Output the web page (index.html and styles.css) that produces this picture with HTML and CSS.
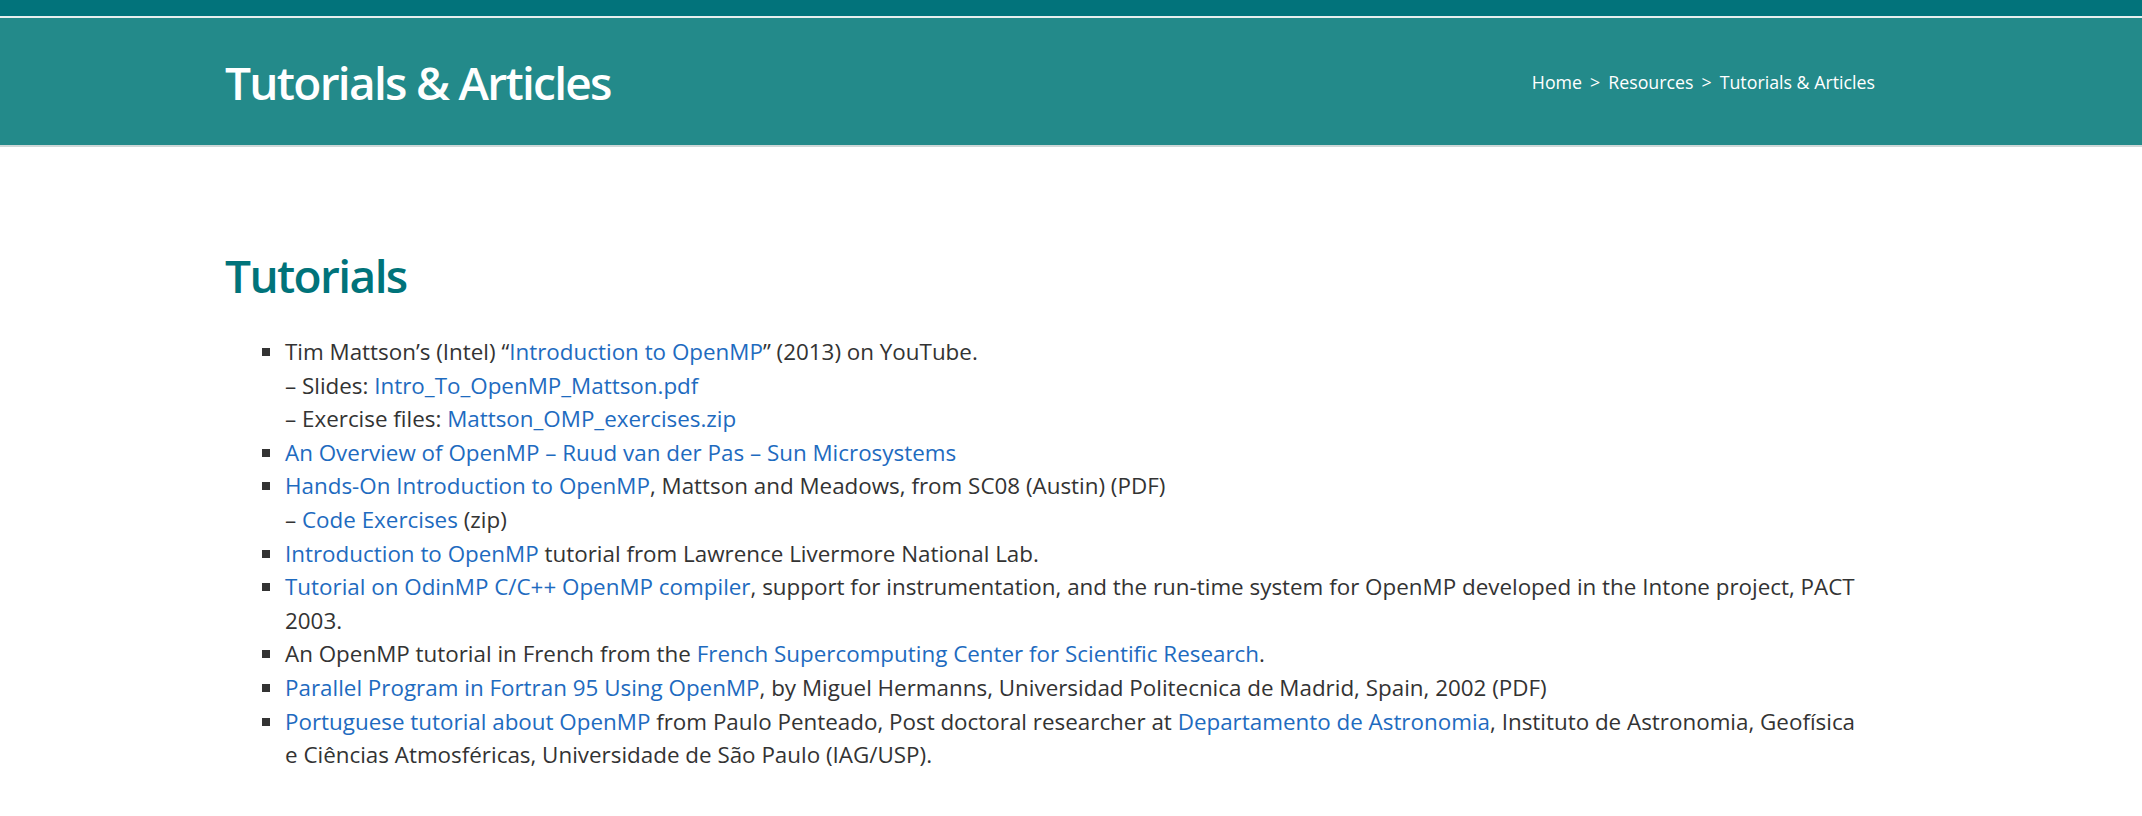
FILE: index.html
```html
<!DOCTYPE html>
<html>
<head>
<meta charset="utf-8">
<link rel="stylesheet" href="styles.css">
</head>
<body>
<div class="topbar"></div>
<header class="page-header">
  <div class="container header-inner">
    <h1 class="page-title">Tutorials &amp; Articles</h1>
    <nav class="breadcrumb"><a href="#">Home</a><span class="sep">&gt;</span><a href="#">Resources</a><span class="sep">&gt;</span><span>Tutorials &amp; Articles</span></nav>
  </div>
</header>
<main class="container content">
  <h2 class="section-title">Tutorials</h2>
  <ul class="list">
    <li>Tim Mattson’s (Intel) “<a href="#">Introduction to OpenMP</a>” (2013) on YouTube.<br>– Slides: <a href="#">Intro_To_OpenMP_Mattson.pdf</a><br>– Exercise files: <a href="#">Mattson_OMP_exercises.zip</a></li>
    <li><a href="#">An Overview of OpenMP – Ruud van der Pas – Sun Microsystems</a></li>
    <li><a href="#">Hands-On Introduction to OpenMP</a>, Mattson and Meadows, from SC08 (Austin) (PDF)<br>– <a href="#">Code Exercises</a> (zip)</li>
    <li><a href="#">Introduction to OpenMP</a> tutorial from Lawrence Livermore National Lab.</li>
    <li><a href="#">Tutorial on OdinMP C/C++ OpenMP compiler</a>, support for instrumentation, and the run-time system for OpenMP developed in the Intone project, PACT 2003.</li>
    <li>An OpenMP tutorial in French from the <a href="#">French Supercomputing Center for Scientific Research</a>.</li>
    <li><a href="#">Parallel Program in Fortran 95 Using OpenMP</a>, by Miguel Hermanns, Universidad Politecnica de Madrid, Spain, 2002 (PDF)</li>
    <li><a href="#">Portuguese tutorial about OpenMP</a> from Paulo Penteado, Post doctoral researcher at <a href="#">Departamento de Astronomia</a>, Instituto de Astronomia, Geofísica e Ciências Atmosféricas, Universidade de São Paulo (IAG/USP).</li>
  </ul>
</main>
</body>
</html>
```
FILE: styles.css
```css
* { box-sizing: border-box; }
html, body { margin: 0; padding: 0; background: #fff; }
body { font-family: "Open Sans", "Liberation Sans", sans-serif; color: #333; }
a { color: #1e6bbf; text-decoration: none; }

.topbar { height: 18px; background: #02737b; border-bottom: 2px solid #e6eeee; }
.container { margin-left: 225px; width: 1650px; }
.page-header { background: #238a8a; height: 129px; border-bottom: 2px solid #cfd8d8; display: flex; }
.header-inner { display: flex; align-items: center; justify-content: space-between; }
.page-title { margin: 0; color: #fff; font-weight: 600; font-size: 46px; letter-spacing: -1.7px; line-height: 1; }
.breadcrumb { color: #fff; font-size: 17.8px; display: flex; align-items: center; }
.breadcrumb a { color: #fff; }
.breadcrumb .sep { margin: 0 8px; }

.content { padding-top: 98px; }
.section-title { margin: 0; color: #00737a; font-weight: 600; font-size: 46px; letter-spacing: -1.6px; line-height: 60px; }
.list { margin: 30px 0 0; padding: 0 12px 0 60px; list-style: square; font-size: 22.4px; line-height: 33.6px; }
.list li::marker { color: #333; }
```
